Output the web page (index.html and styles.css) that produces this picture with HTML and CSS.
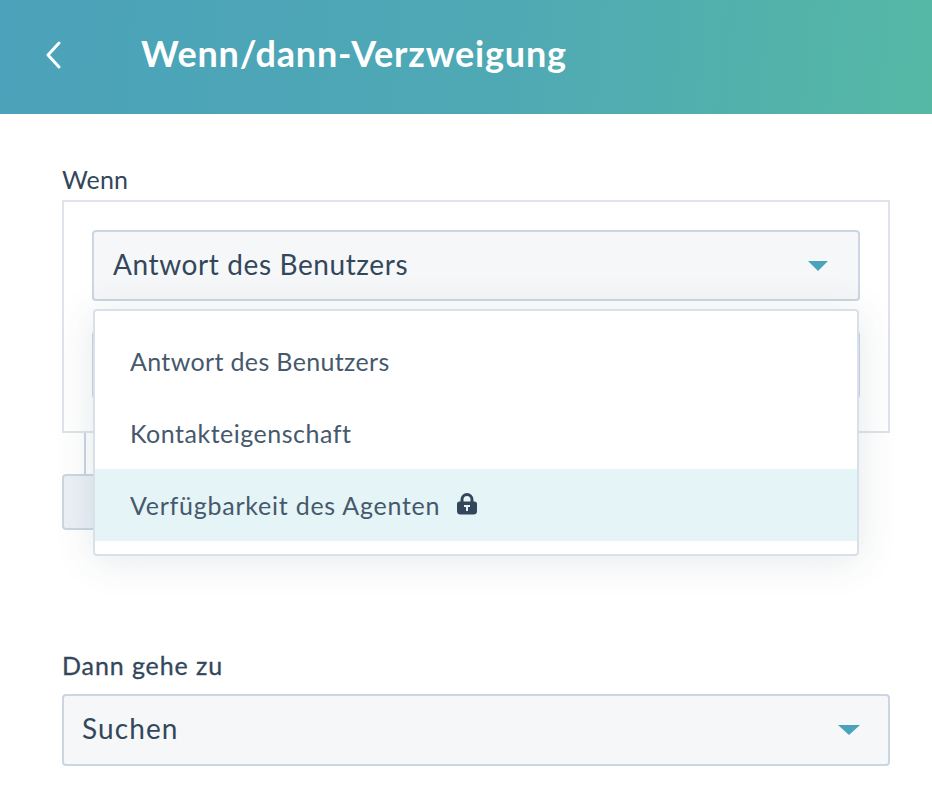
FILE: index.html
```html
<html>

<head>
    <title>Wenn/dann-Verzweigung</title>
    <link rel="stylesheet" href="styles.css">
</head>

<body>
    <header class="header">
        <svg class="back" width="16" height="28" viewBox="0 0 16 28">
            <path d="M14 2 L3 14 L14 26" />
        </svg>
        <h1 class="title">Wenn/dann-Verzweigung</h1>
    </header>
    <main class="content">
        <div class="label">Wenn</div>
        <section class="branch">
            <div class="box">
                <div class="select select-inner">
                    <span class="select-text">Antwort des Benutzers</span>
                    <span class="caret caret-small"></span>
                </div>
                <div class="select select-hidden"></div>
            </div>
            <div class="connector"></div>
            <div class="add-button"></div>

            <div class="menu">
                <div class="option option-first">Antwort des Benutzers</div>
                <div class="option">Kontakteigenschaft</div>
                <div class="option active">
                    Verfügbarkeit des Agenten
                    <svg class="lock" width="22" height="24" viewBox="0 0 22 24">
                        <path class="lock-bow" d="M6 11 V7.5 a5 5 0 0 1 10 0 V11" />
                        <path class="lock-body" fill-rule="evenodd" d="M3.5 9.5 h15 a2.5 2.5 0 0 1 2.5 2.5 v7 a3.5 3.5 0 0 1 -3.5 3.5 h-13 a3.5 3.5 0 0 1 -3.5 -3.5 v-7 a2.5 2.5 0 0 1 2.5 -2.5 Z M8 13 v2 h2 v4 h2 v-4 h2 v-2 Z" />
                    </svg>
                </div>
            </div>
        </section>
        <div class="label label-strong">Dann gehe zu</div>
        <div class="select select-outer">
            <span class="select-text">Suchen</span>
            <span class="caret"></span>
        </div>
    </main>
</body>

</html>
```

FILE: styles.css
```css
* {
    margin: 0;
    padding: 0;
    box-sizing: border-box;
}

:root {
    --text-color: #33475b;
    --border-color: #cbd6e2;
    --box-border: #dfe3eb;
    --field-color: #f6f7f9;
    --caret-color: #4aa3ba;
}

body {
    font-family: Lato, "Noto Sans", sans-serif;
    color: var(--text-color);
    background-color: white;
    overflow: hidden;
}

.header {
    display: flex;
    align-items: center;
    height: 114px;
    padding-left: 45px;
    background: linear-gradient(95deg, #4ba2ba 0%, #4fa9b4 55%, #55b8a5 100%);
}

.back {
    margin-bottom: 5px;
    fill: none;
    stroke: white;
    stroke-width: 3;
    stroke-linecap: round;
    stroke-linejoin: round;
}

.title {
    margin-left: 80px;
    margin-bottom: 8px;
    font-size: 36px;
    font-weight: 700;
    letter-spacing: 0.8px;
    color: white;
}

.content {
    padding: 49px 42px 0 62px;
}

.label {
    font-size: 25px;
    line-height: 32px;
    margin-bottom: 5px;
    letter-spacing: 0.1px;
}

.label-strong {
    letter-spacing: 0.9px;
    -webkit-text-stroke: 0.3px var(--text-color);
    margin-bottom: 13px;
}

.branch {
    position: relative;
    height: 449px;
}

.box {
    height: 233px;
    padding: 28px 28px 0;
    border: 2px solid var(--box-border);
}

.select {
    display: flex;
    align-items: center;
    justify-content: space-between;
    height: 71px;
    border: 2px solid var(--border-color);
    border-radius: 4px;
    background-color: var(--field-color);
    font-size: 28px;
}

.select-text {
    margin-bottom: 4px;
    letter-spacing: 0.6px;
}

.select-inner {
    padding: 0 30px 0 19px;
}

.select-hidden {
    margin-top: 30px;
    height: 68px;
}

.select-outer {
    height: 72px;
    padding: 0 28px 0 18px;
}

.select-outer .select-text {
    letter-spacing: 1.1px;
}

.caret {
    width: 0;
    height: 0;
    border-left: 11px solid transparent;
    border-right: 11px solid transparent;
    border-top: 10px solid var(--caret-color);
}

.caret-small {
    border-left-width: 10px;
    border-right-width: 10px;
}

.connector {
    width: 2px;
    height: 41px;
    margin-left: 22px;
    background-color: var(--border-color);
}

.add-button {
    width: 60px;
    height: 56px;
    border: 2px solid var(--border-color);
    border-radius: 4px;
    background-color: #eaf0f6;
}

.menu {
    position: absolute;
    top: 109px;
    left: 31px;
    width: 766px;
    height: 247px;
    padding-top: 14px;
    border: 2px solid #d8e0ea;
    border-radius: 4px;
    background-color: white;
    box-shadow: 0 4px 40px rgba(45, 62, 80, 0.12);
}

.option {
    display: flex;
    align-items: center;
    height: 72px;
    padding-left: 35px;
    font-size: 25px;
    letter-spacing: 0.5px;
    color: #46596c;
}

.option-first {
    letter-spacing: 0.35px;
}

.active {
    letter-spacing: 0.75px;
    background-color: #e5f4f6;
}

.lock {
    margin-left: 16px;
    margin-bottom: 3px;
}

.lock-bow {
    fill: none;
    stroke: var(--text-color);
    stroke-width: 3;
}

.lock-body {
    fill: var(--text-color);
}
```
